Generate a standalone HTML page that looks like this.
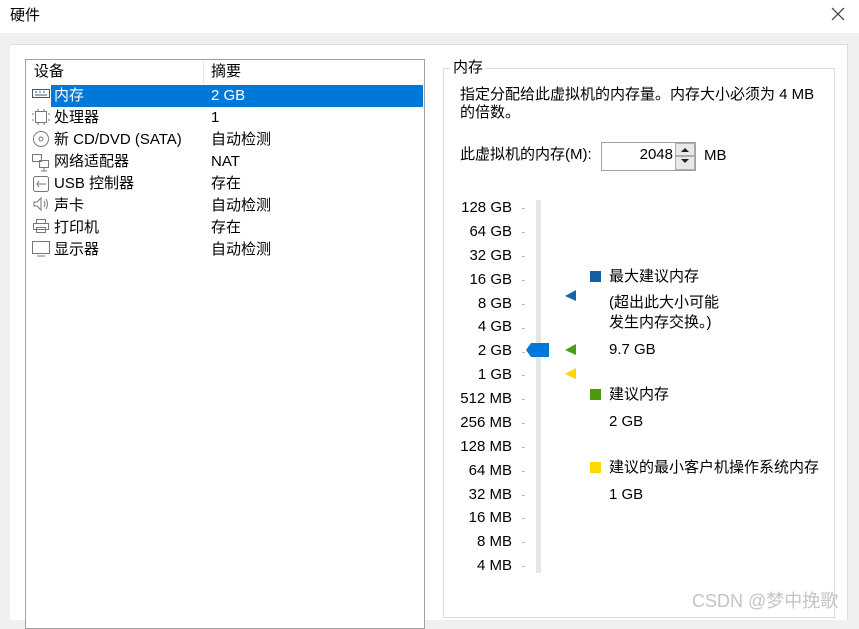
<!DOCTYPE html>
<html><head><meta charset="utf-8"><style>
*{margin:0;padding:0;box-sizing:border-box}
body{width:859px;height:620px;overflow:hidden;background:#f0f0f0;position:relative;font-family:"Liberation Sans","Noto Sans CJK SC",sans-serif;font-size:15px;color:#000}
.a{position:absolute;white-space:nowrap;line-height:18px}
.r{text-align:right}
</style></head><body>
<div class="a" style="left:0;top:0;width:859px;height:33px;background:#fff"></div>
<div class="a" style="left:10px;top:7px">硬件</div>
<svg class="a" style="left:831px;top:7px" width="14" height="14"><path d="M1 1L13 13M13 1L1 13" stroke="#333" stroke-width="1.2"/></svg>
<div class="a" style="left:10px;top:44px;width:838px;height:576px;background:#fff;border-top:1px solid #ddd;border-right:1px solid #ddd"></div>
<!-- list -->
<div class="a" style="left:25px;top:59px;width:400px;height:570px;border:1px solid #a0a0a0;background:#fff"></div>
<div class="a" style="left:203px;top:61px;width:1px;height:23px;background:#e5e5e5"></div>
<div class="a" style="left:34px;top:63px">设备</div>
<div class="a" style="left:211px;top:63px">摘要</div>
<div class="a" style="left:51px;top:85px;width:372px;height:22px;background:#0078d7"></div>
<div class="a" style="left:54px;top:87px;color:#fff">内存</div><div class="a" style="left:211px;top:87px;color:#fff">2 GB</div>
<div class="a" style="left:54px;top:109px">处理器</div><div class="a" style="left:211px;top:109px">1</div>
<div class="a" style="left:54px;top:131px">新 CD/DVD (SATA)</div><div class="a" style="left:211px;top:131px">自动检测</div>
<div class="a" style="left:54px;top:153px">网络适配器</div><div class="a" style="left:211px;top:153px">NAT</div>
<div class="a" style="left:54px;top:175px">USB 控制器</div><div class="a" style="left:211px;top:175px">存在</div>
<div class="a" style="left:54px;top:197px">声卡</div><div class="a" style="left:211px;top:197px">自动检测</div>
<div class="a" style="left:54px;top:219px">打印机</div><div class="a" style="left:211px;top:219px">存在</div>
<div class="a" style="left:54px;top:241px">显示器</div><div class="a" style="left:211px;top:241px">自动检测</div>
<svg class="a" style="left:31px;top:86px" width="20" height="180" fill="none" stroke="#777" stroke-width="1">
<rect x="1.5" y="3.5" width="17" height="8" stroke="#456"/><path d="M4 6h2M8 6h2M12 6h2M4 9h12" stroke="#456"/>
<rect x="4.5" y="25.5" width="11" height="11"/><path d="M3 28h-2M3 34h-2M17 28h2M17 34h2M7 23v2M13 23v2M7 37v2M13 37v2"/>
<circle cx="10" cy="53" r="7.5"/><circle cx="10" cy="53" r="2"/>
<rect x="1.5" y="68.5" width="9" height="7"/><rect x="8.5" y="74.5" width="9" height="7"/><path d="M13 82v3M10 85h6"/>
<rect x="2.5" y="90.5" width="15" height="15" rx="2"/><path d="M6 98h9M8 95l-2 3 2 3"/>
<path d="M3 116h3l4-4v12l-4-4H3z"/><path d="M13 115q2 3 0 6M15 113q3 5 0 10"/>
<rect x="5.5" y="133.5" width="9" height="4"/><rect x="2.5" y="137.5" width="15" height="6"/><rect x="5.5" y="141.5" width="9" height="5"/>
<rect x="1.5" y="155.5" width="17" height="12"/><path d="M6 170h8"/>
</svg>
<!-- group -->
<div class="a" style="left:443px;top:68px;width:392px;height:550px;border:1px solid #dcdcdc"></div>
<div class="a" style="left:450px;top:59px;background:#fff;padding:0 3px">内存</div>
<div class="a" style="left:460px;top:86px">指定分配给此虚拟机的内存量。内存大小必须为 4 MB</div>
<div class="a" style="left:460px;top:104px">的倍数。</div>
<div class="a" style="left:460px;top:146px">此虚拟机的内存(M):</div>
<div class="a" style="left:601px;top:142px;width:95px;height:29px;border:1px solid #a0a0a0;background:#fff"></div>
<div class="a r" style="left:601px;top:146px;width:72px">2048</div>
<div class="a" style="left:675px;top:143px;width:20px;height:13px;border:1px solid #adadad;background:#e8e8e8"></div>
<div class="a" style="left:675px;top:156px;width:20px;height:14px;border:1px solid #adadad;background:#e8e8e8"></div>
<svg class="a" style="left:680px;top:146px" width="10" height="20"><path d="M1 6l4-4 4 4zM1 13l4 4 4-4z" fill="#222"/></svg>
<div class="a" style="left:704px;top:147px">MB</div>
<div class="a" style="left:536px;top:200px;width:5px;height:373px;background:#e6e6e6"></div>
<div class="a r" style="left:440px;top:196px;width:72px;line-height:23.87px">128 GB<br>64 GB<br>32 GB<br>16 GB<br>8 GB<br>4 GB<br>2 GB<br>1 GB<br>512 MB<br>256 MB<br>128 MB<br>64 MB<br>32 MB<br>16 MB<br>8 MB<br>4 MB</div>
<svg class="a" style="left:520px;top:200px" width="60" height="380">
<g stroke="#bbb"><path d="M2 8.5h3M2 32.5h3M2 56.5h3M2 80.5h3M2 104.5h3M2 128.5h3M2 152.5h3M2 175.5h3M2 199.5h3M2 223.5h3M2 247.5h3M2 271.5h3M2 295.5h3M2 318.5h3M2 342.5h3M2 366.5h3"/></g>
<path d="M6 150l5-7h18v14H11z" fill="#0078d7"/>
<path d="M45 96l11-6v11z" fill="#1565a8"/>
<path d="M45 150l11-6v11z" fill="#4e9a1a"/>
<path d="M45 174l11-6v11z" fill="#ffd700"/>
</svg>
<div class="a" style="left:590px;top:271px;width:11px;height:11px;background:#1160a5"></div>
<div class="a" style="left:609px;top:268px">最大建议内存</div>
<div class="a" style="left:609px;top:294px">(超出此大小可能</div>
<div class="a" style="left:609px;top:314px">发生内存交换。)</div>
<div class="a" style="left:609px;top:341px">9.7 GB</div>
<div class="a" style="left:590px;top:389px;width:11px;height:11px;background:#4e9a0e"></div>
<div class="a" style="left:609px;top:386px">建议内存</div>
<div class="a" style="left:609px;top:413px">2 GB</div>
<div class="a" style="left:590px;top:462px;width:11px;height:11px;background:#ffd800"></div>
<div class="a" style="left:609px;top:459px">建议的最小客户机操作系统内存</div>
<div class="a" style="left:609px;top:486px">1 GB</div>
<div class="a" style="left:692px;top:590px;font-size:18px;line-height:22px;color:#c4c4c4">CSDN @梦中挽歌</div>
</body></html>
